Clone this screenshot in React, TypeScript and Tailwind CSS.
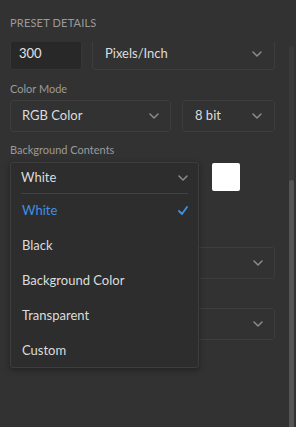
import React from 'react'

const Chevron = ({ className = '' }: { className?: string }) => (
    <svg width="10" height="6" viewBox="0 0 10 6" className={className} fill="none">
        <path d="M1 1l4 4 4-4" stroke="#8c8c8c" strokeWidth="1.5" strokeLinecap="round" strokeLinejoin="round" />
    </svg>
)

const Check = () => (
    <svg width="10" height="9" viewBox="0 0 10 9" fill="none">
        <path d="M1 5l3 3 5-7" stroke="#3f8fe6" strokeWidth="1.8" strokeLinecap="round" strokeLinejoin="round" />
    </svg>
)

function Select({ value, className = '' }: { value?: string; className?: string }) {
    return (
        <div className={`h-[32px] flex items-center justify-between border border-[#3d3d3d] rounded-[3px] pl-[11px] pr-[11px] ${className}`}>
            <span className="text-[13px] text-[#dcdcdc]">{value}</span>
            <Chevron />
        </div>
    )
}

export default function App() {
    const items = ['White', 'Black', 'Background Color', 'Transparent', 'Custom']
    return (
        <div className="w-[296px] h-[427px] bg-[#323232] flex flex-col overflow-hidden relative" style={{ fontFamily: 'Lato, "Open Sans", sans-serif' }}>
            <div className="h-[42px] shrink-0 pl-[10px] pt-[17px] text-[11px] tracking-[0.2px] text-[#9a9a9a] leading-none">PRESET DETAILS</div>
            <div className="flex-1 flex overflow-hidden">
                <div className="flex-1 pl-[10px] pr-[14px]">
                    <div className="flex gap-[10px] mt-[-4px]">
                        <div className="w-[72px] h-[32px] bg-[#282828] border border-[#363636] rounded-[3px] flex items-center pl-[8px] text-[13px] text-[#e2e2e2]">300</div>
                        <Select value="Pixels/Inch" className="flex-1 pl-[12px] pr-[12px]" />
                    </div>
                    <div className="mt-[11px] h-[16px] flex items-center text-[11px] text-[#9a9a9a]">Color Mode</div>
                    <div className="flex gap-[11px] mt-[3px]">
                        <Select value="RGB Color" className="w-[161px]" />
                        <Select value="8 bit" className="flex-1 pl-[12px] pr-[12px]" />
                    </div>
                    <div className="mt-[10px] h-[16px] flex items-center text-[11px] text-[#9a9a9a]">Background Contents</div>
                    <div className="flex gap-[13px] mt-[4px] items-start">
                        <Select value="White" className="w-[189px]" />
                        <div className="w-[28px] h-[28px] mt-[1px] bg-white rounded-[2px]" />
                    </div>
                    <Select value="" className="mt-[53px]" />
                    <Select value="" className="mt-[29px]" />
                </div>
                <div className="w-[5px] mr-[2px] mt-[4px] bg-[#3a3a3a] rounded-t-[3px] flex flex-col">
                    <div className="mt-[134px] flex-1 bg-[#555555] rounded-t-[3px]" />
                </div>
            </div>

            <div className="absolute left-[10px] top-[162px] w-[189px] h-[206px] bg-[#2d2d2d] border border-[#3d3d3d] rounded-[3px] shadow-[0_2px_6px_rgba(0,0,0,0.35)]">
                <div className="h-[30px] flex items-center justify-between pl-[10px] pr-[10px]">
                    <span className="text-[13px] text-[#dcdcdc]">White</span>
                    <Chevron />
                </div>
                <div className="mx-[10px] h-px bg-[#424242]" />
                {items.map((it, i) => (
                    <div key={it} className="h-[35px] flex items-center justify-between pl-[11px] pr-[10px] pb-[2px]">
                        <span className={`text-[13px] ${i === 0 ? 'text-[#3f8fe6]' : 'text-[#dcdcdc]'}`}>{it}</span>
                        {i === 0 && <Check />}
                    </div>
                ))}
            </div>
        </div>
    )
}
